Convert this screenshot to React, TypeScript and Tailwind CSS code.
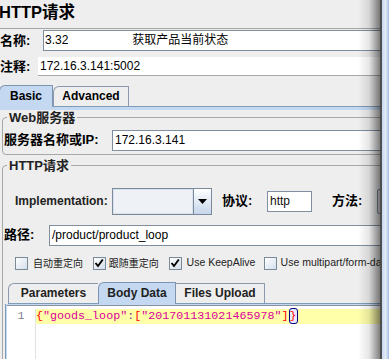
import React from 'react';

const label = 'text-[13px] font-bold whitespace-nowrap shrink-0';
const field = 'h-[21px] border border-[#7f8fa0] bg-white text-[12px] leading-[19px] whitespace-nowrap';

function Check({ checked }: { checked?: boolean }) {
  return (
    <span className="w-[13px] h-[13px] shrink-0 border border-[#7a8a99] bg-linear-to-br from-white to-[#d3deeb] flex items-center justify-center">
      {checked && (
        <svg width="10" height="10" viewBox="0 0 10 10">
          <path d="M1.5 5 L4 8 L8.8 1.5" fill="none" stroke="#000" strokeWidth="1.9" />
        </svg>
      )}
    </span>
  );
}

export default function App() {
  return (
    <div className="w-[389px] h-[359px] flex overflow-hidden bg-[#eeeeee] text-black font-['Liberation_Sans','Noto_Sans_CJK_SC',sans-serif]">
      <div className="relative w-[380px] shrink-0 overflow-hidden">
        <div className="w-[440px]">
          {/* title */}
          <div className="h-[29px] border-b border-[#a5a5a5]">
            <div className="-ml-px pt-[2px] text-[16.5px] leading-[20px] font-bold">HTTP请求</div>
          </div>

          {/* name */}
          <div className="mt-[1px] flex items-center">
            <span className={`${label} w-[43px]`}>名称:</span>
            <div className={`${field} flex-1 pl-[1px] flex`}>
              <span>3.32</span>
              <span className="ml-[64px]">获取产品当前状态</span>
            </div>
          </div>

          {/* comment */}
          <div className="mt-[6px] flex items-center">
            <span className={`${label} w-[38px]`}>注释:</span>
            <div className="flex-1 h-[19px] bg-white border-b border-[#a8a8a8] pl-[2px] text-[12px] leading-[18px]">
              172.16.3.141:5002
            </div>
          </div>

          {/* top tabs */}
          <div className="mt-[8px] flex items-end h-[22px] text-[12px] font-bold">
            <div className="-ml-px w-[54px] h-[22px] rounded-tl-[6px] border-t border-x border-[#7f94b0] bg-[#c4d9f1] flex items-center justify-center">
              Basic
            </div>
            <div className="w-[76px] h-[21px] rounded-tl-[6px] border border-[#8a99ad] border-b-[#7f9db9] flex items-center justify-center">
              Advanced
            </div>
            <div className="flex-1 h-full border-b border-[#7f9db9]" />
          </div>
          <div className="h-[3px] bg-[#c4d9f1]" />

          {/* web server */}
          <fieldset className="mx-[2px] min-w-0 border border-[#a8a8a8] rounded-[4px] pl-px pt-[4px] pb-[3px]">
            <legend className="ml-[3px] px-[2px] text-[13px] leading-[16px] font-bold text-[#222]">Web服务器</legend>
            <div className="flex items-center">
              <span className={`${label} w-[108px]`}>服务器名称或IP:</span>
              <div className={`${field} flex-1 pl-[2px]`}>172.16.3.141</div>
            </div>
          </fieldset>

          {/* http request */}
          <fieldset className="mt-[3px] mx-[2px] min-w-0 border border-[#a8a8a8] rounded-[4px] pl-px h-[240px]">
            <legend className="ml-[3px] px-[2px] text-[13px] leading-[16px] font-bold text-[#222]">HTTP请求</legend>

            <div className="mt-[14px] pl-[11px] flex items-center h-[27px]">
              <span className="w-[97px] shrink-0 text-[12px] font-bold text-[#222]">Implementation:</span>
              <div className="flex h-[27px] border border-[#7a8a9c]">
                <div className="w-[80px] border border-[#d9e1ea] bg-[#eef2f6]" />
                <div className="w-[18px] border-l border-[#7a8a9c] bg-linear-to-b from-white to-[#c6d6ea] flex items-center justify-center">
                  <svg width="9" height="5" viewBox="0 0 9 5">
                    <polygon points="0,0 9,0 4.5,5" fill="#000" />
                  </svg>
                </div>
              </div>
              <span className={`${label} ml-[10px] w-[45px]`}>协议:</span>
              <div className={`${field} w-[48px] pl-[2px] text-[#111]`}>http</div>
              <span className={`${label} ml-[20px] w-[45px]`}>方法:</span>
              <div className="w-[60px] h-[25px] shrink-0 border border-[#7a8a9c] rounded-[2px] bg-[#e4e4e4]" />
            </div>

            <div className="mt-[10px] flex items-center">
              <span className={`${label} w-[45px]`}>路径:</span>
              <div className={`${field} flex-1 pl-[2px] text-[12.5px]`}>/product/product_loop</div>
            </div>

            <div className="mt-[11px] pl-[11px] flex items-center h-[13px] text-[#222] whitespace-nowrap">
              <div className="w-[81px] flex items-center gap-[5px]">
                <Check />
                <span className="text-[10px]">自动重定向</span>
              </div>
              <div className="w-[79px] flex items-center gap-[3px]">
                <Check checked />
                <span className="text-[10px]">跟随重定向</span>
              </div>
              <div className="w-[99px] flex items-center gap-[5px]">
                <Check checked />
                <span className="text-[10.5px]">Use KeepAlive</span>
              </div>
              <div className="flex items-center gap-[4px]">
                <Check />
                <span className="text-[10.5px]">Use multipart/form-data for POST</span>
              </div>
            </div>

            {/* body tabs */}
            <div className="mt-[12px] ml-[4px] flex items-end h-[22px] text-[12px] font-bold text-[#222]">
              <div className="w-[90px] h-[21px] rounded-tl-[6px] border-t border-l border-b border-[#8a99ad] border-b-[#7f9db9] flex items-center justify-center">
                Parameters
              </div>
              <div className="w-[78px] h-[22px] rounded-tl-[6px] border-t border-x border-[#7f94b0] bg-[#c4d9f1] flex items-center justify-center">
                Body Data
              </div>
              <div className="w-[89px] h-[21px] border-t border-r border-b border-[#8a99ad] border-b-[#7f9db9] flex items-center justify-center">
                Files Upload
              </div>
              <div className="flex-1 h-full border-b border-[#7f9db9]" />
            </div>
            <div className="ml-[1px] border-l border-[#7f9db9] pl-px pt-px bg-[#c4d9f1] h-[60px]">
              <div className="h-full border-t border-[#8a94a0] bg-white flex pt-[3px] font-['Liberation_Mono',monospace] text-[11.7px] leading-[15px]">
                <div className="w-[29px] shrink-0 border-r border-[#e2e2e2] text-center text-[#7f7f8f]">1</div>
                <div className="flex-1 h-[15px] bg-[#ffffaa] whitespace-pre">
                  <span className="text-[#ff0000]">{'{'}</span>
                  <span className="text-[#dc009c]">"goods_loop"</span>
                  <span className="text-[#804080]">:</span>
                  <span className="text-[#ff0000]">[</span>
                  <span className="text-[#dc009c]">"201701131021465978"</span>
                  <span className="text-[#ff0000]">]</span>
                  <span className="text-[#ff0000] border border-[#000080] rounded-[3px] bg-[#eaeaff]">{'}'}</span>
                </div>
              </div>
            </div>
          </fieldset>
        </div>
        <div className="pointer-events-none absolute inset-y-0 right-0 w-[22px] bg-linear-to-r from-transparent via-black/10 to-black/50" />
      </div>
      <div className="w-[2px] shrink-0 bg-[#4e4e4e]" />
      <div className="flex-1 bg-linear-to-r from-[#c5d8f0] via-[#e2ebf7] to-[#a2bee3]" />
    </div>
  );
}
